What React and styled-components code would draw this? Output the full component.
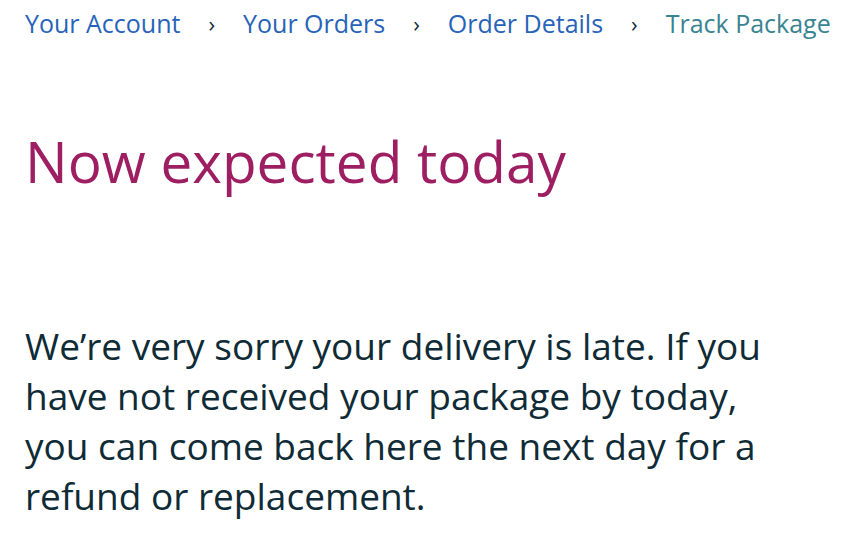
import React from "react";
import styled, { createGlobalStyle } from "styled-components";

const Global = createGlobalStyle`
  html, body { margin: 0; padding: 0; background: #ffffff; }
  body { font-family: "Open Sans", "Noto Sans", sans-serif; }
`;

const Page = styled.main`
  width: 842px;
  height: 534px;
  box-sizing: border-box;
  padding: 0 0 0 25px;
  overflow: hidden;
`;

const Crumbs = styled.nav`
  display: flex;
  align-items: center;
  gap: 28px;
  height: 45px;
  font-size: 25px;
  white-space: nowrap;
`;

const Crumb = styled.a`
  color: ${(p) => (p.$current ? "#3a8491" : "#2763b9")};
  text-decoration: none;
`;

const Sep = styled.span`
  color: #0f2a36;
  font-size: 22px;
`;

const Heading = styled.h1`
  margin: 80px 0 0;
  font-weight: 400;
  font-size: 56.7px;
  line-height: 72px;
  color: #9e1e62;
`;

const Body = styled.p`
  margin: 124px 0 0;
  font-size: 37px;
  line-height: 50px;
  color: #0f2b36;
  width: 750px;
`;

export default function App() {
  return (
    <>
      <Global />
      <Page>
        <Crumbs>
          <Crumb href="#">Your Account</Crumb>
          <Sep>›</Sep>
          <Crumb href="#">Your Orders</Crumb>
          <Sep>›</Sep>
          <Crumb href="#">Order Details</Crumb>
          <Sep>›</Sep>
          <Crumb $current>Track Package</Crumb>
        </Crumbs>
        <Heading>Now expected today</Heading>
        <Body>
          We’re very sorry your delivery is late. If you have not received your
          package by today, you can come back here the next day for a refund or
          replacement.
        </Body>
      </Page>
    </>
  );
}
